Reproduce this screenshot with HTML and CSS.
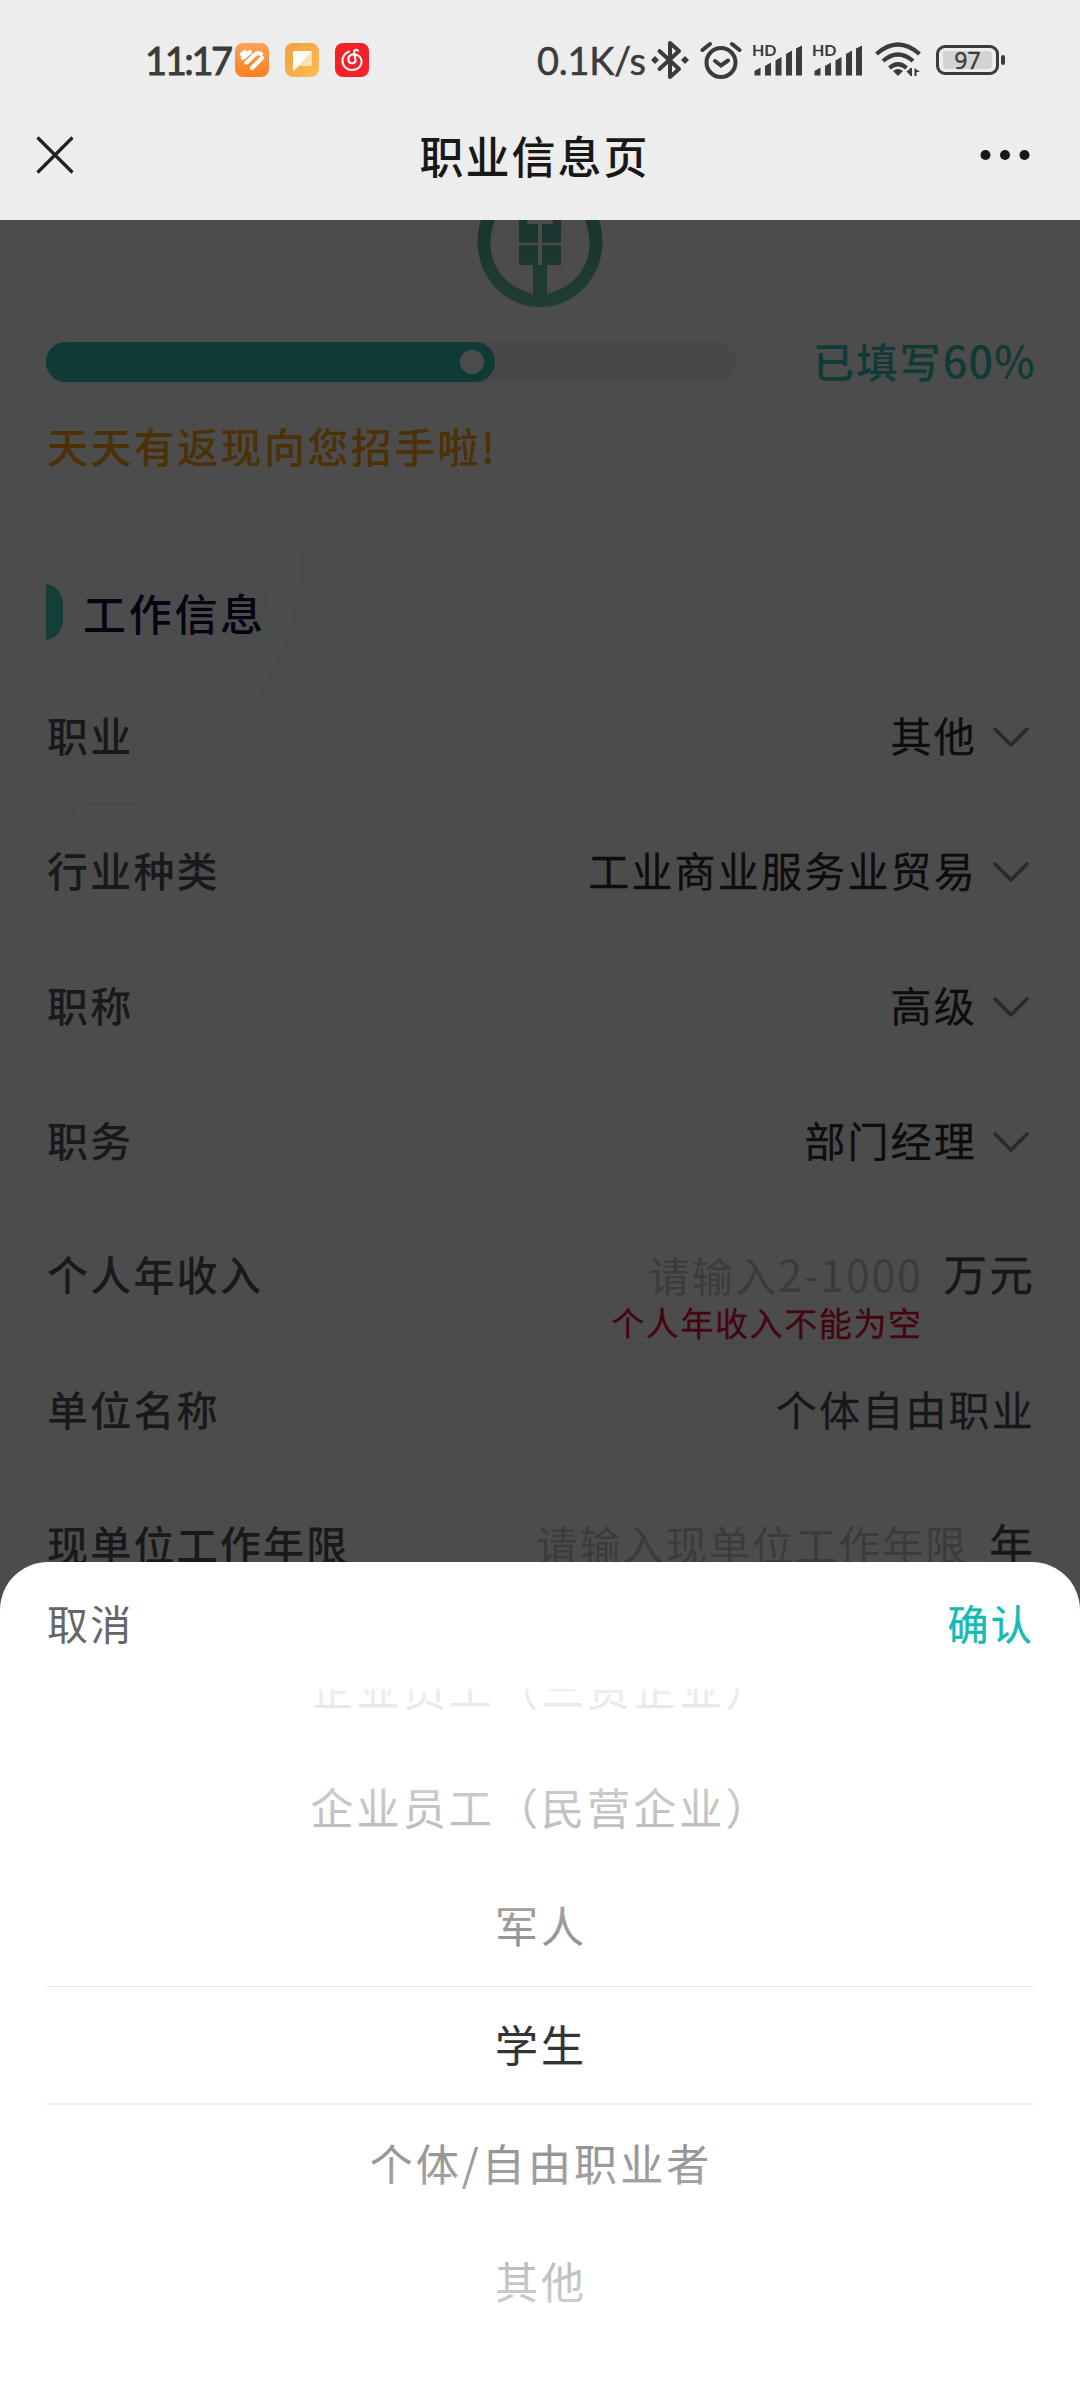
FILE: index.html
```html
<!DOCTYPE html>
<html lang="zh-CN">
<head>
<meta charset="utf-8">
<title>职业信息页</title>
<link rel="stylesheet" href="styles.css">
</head>
<body>
<div class="screen">
  <header class="top">
    <div class="status">
      <div class="status-left">
        <span class="clock">11:17</span>
        <svg class="app" viewBox="0 0 34 34"><defs><linearGradient id="g1" x2="0" y2="1"><stop stop-color="#f9a35b"/><stop offset="1" stop-color="#fb7f1c"/></linearGradient><linearGradient id="g2" x2="1" y2="1"><stop stop-color="#efa045"/><stop offset="1" stop-color="#ffbb50"/></linearGradient></defs><rect width="34" height="34" rx="8" fill="url(#g1)"/><g fill="none" stroke="#fff" stroke-width="4.2" stroke-linecap="round"><path d="M7 11l3-2M8 15l7-6M11.500 19.500l8.500-8Q23 9 26 11M17 25l10-10"/></g></svg>
        <svg class="app" viewBox="0 0 34 34"><rect width="34" height="34" rx="8" fill="url(#g2)"/><path d="M8 8h19v15H14.500L8 28z" fill="#ffe0b0"/><path d="M8 8h19L8 28z" fill="#fff"/></svg>
        <svg class="app" viewBox="0 0 34 34"><rect width="34" height="34" rx="8" fill="#f5202a"/><g fill="none" stroke="#fff" stroke-width="2.100" stroke-linecap="round"><path d="M14 8.500C3.500 13 6.500 27 17 27c10 0 13-11.500 5-15-5-2.300-9.500 1-8.500 5.500 1 4 7.500 3.500 7 -1l-1.500-7c-.3-2.500 2.500-3.500 4-1.800"/></g></svg>
      </div>
      <div class="status-right">
        <span class="speed">0.1K/s</span>
        <svg class="bt" width="38" height="42" viewBox="0 0 38 42"><g fill="none" stroke="#3b3b3b" stroke-width="4" stroke-linejoin="round" stroke-linecap="round"><path d="M8.500 12L28 30l-9 8V4l9 8L8.500 30"/></g><path d="M0 21l4-4 4 4-4 4zM30 21l4-4 4 4-4 4z" fill="#3b3b3b"/></svg>
        <svg class="alarm" width="42" height="38" viewBox="0 0 42 38"><g fill="none" stroke="#3b3b3b" stroke-width="4" stroke-linecap="round"><circle cx="21" cy="21.500" r="14.500"/><path d="M15 20l6 4.500 7-5M2.500 9L10 3M39.500 9L32 3"/></g></svg>
        <svg class="signal" width="50" height="34" viewBox="0 0 50 34"><path d="M2.500 32.500V28l6-3.500v8zM13 32.500V23l6-3.500v13zM23.500 32.500V17.500l6-3.500v18.500zM34 32.500V11l6-3.500v25zM44 32.500V5.500L50 2.500v30z" fill="#3b3b3b"/><text x="0" y="12.500" class="hd">HD</text></svg>
        <svg class="signal" width="50" height="34" viewBox="0 0 50 34"><path d="M2.500 32.500V28l6-3.500v8zM13 32.500V23l6-3.500v13zM23.500 32.500V17.500l6-3.500v18.500zM34 32.500V11l6-3.500v25zM44 32.500V5.500L50 2.500v30z" fill="#3b3b3b"/><text x="0" y="12.500" class="hd">HD</text></svg>
        <svg class="wifi" width="46" height="36" viewBox="0 0 46 36"><g fill="none" stroke="#3b3b3b" stroke-width="4.200"><path d="M1.500 12Q23-7 44.500 12M8 19q15-13 30 0M14.500 26q8.500-7.500 17 0"/></g><path d="M18 29q5-4 10 0l-5 5z" fill="#3b3b3b"/><path d="M36 26v8l-4.500-4.500zM35 26h2v8h-2zM39.500 26v8h2v-4h3.500z" fill="#3b3b3b"/></svg>
        <span class="battery"><span class="level">97</span></span>
      </div>
    </div>
    <div class="nav">
      <svg width="38" height="38" viewBox="0 0 38 38"><path d="M1.500 1.500l35 35M36.500 1.500l-35 35" stroke="#202020" stroke-width="3.200"/></svg>
      <h1>职业信息页</h1>
      <svg width="50" height="12" viewBox="0 0 50 12" fill="#181818"><circle cx="5.500" cy="6" r="5"/><circle cx="25" cy="6" r="5"/><circle cx="44.500" cy="6" r="5"/></svg>
    </div>
  </header>

  <main class="page">
    <svg class="watermark" width="1080" height="1342" viewBox="0 0 1080 1342"><g fill="none" stroke="#4b4e4d" stroke-width="29"><path d="M287 332C284 450 205 550 78 600"/><path d="M1062 1282Q1020 1315 960 1340"/></g></svg>
    <svg class="logo" width="126" height="88" viewBox="0 0 126 88"><defs><linearGradient id="g3" x2="0" y2="1"><stop stop-color="#19342f"/><stop offset="1" stop-color="#203d33"/></linearGradient></defs><path fill="url(#g3)" fill-rule="evenodd" d="M4 0H18C8 24 12 62 56 74V45H42V0H50V2Q50 4 52 4H74Q76 4 76 2V0H84V45H70V74C114 62 118 24 108 0H122C136 43 106 87 63 87S-10 43 4 0z"/><path d="M63 4v41" stroke="#4c4c4c" stroke-width="4"/><path d="M42 24h42" stroke="#4c4c4c" stroke-width="2.500"/></svg>
    <section class="progress">
      <div class="track"><div class="fill"><i></i></div></div>
      <span class="percent">已填写<b>60%</b></span>
    </section>
    <p class="promo">天天有返现向您招手啦!</p>
    <h2><i></i>工作信息</h2>
    <div class="rows">
      <div class="row"><label>职业</label><span class="value">其他</span><svg class="chev" viewBox="0 0 36 22"><path d="M2 2l16 16L34 2"/></svg></div>
      <div class="row"><label>行业种类</label><span class="value">工业商业服务业贸易</span><svg class="chev" viewBox="0 0 36 22"><path d="M2 2l16 16L34 2"/></svg></div>
      <div class="row"><label>职称</label><span class="value">高级</span><svg class="chev" viewBox="0 0 36 22"><path d="M2 2l16 16L34 2"/></svg></div>
      <div class="row"><label>职务</label><span class="value">部门经理</span><svg class="chev" viewBox="0 0 36 22"><path d="M2 2l16 16L34 2"/></svg></div>
      <div class="row"><label>个人年收入</label><span class="field"><span class="hint">请输入<b>2-1000</b></span><em class="error">个人年收入不能为空</em></span><span class="unit">万元</span></div>
      <div class="row"><label>单位名称</label><span class="plain">个体自由职业</span></div>
      <div class="row"><label>现单位工作年限</label><span class="hint">请输入现单位工作年限</span><span class="unit">年</span></div>
    </div>
  </main>

  <section class="sheet">
    <div class="actions"><span class="cancel">取消</span><span class="confirm">确认</span></div>
    <div class="picker">
      <ul>
        <li>企业员工（三资企业）</li>
        <li>企业员工（民营企业）</li>
        <li>军人</li>
        <li class="current">学生</li>
        <li>个体/自由职业者</li>
        <li>其他</li>
      </ul>
    </div>
  </section>
</div>
</body>
</html>
```
FILE: styles.css
```css
* { box-sizing: border-box; margin: 0; padding: 0; }
body { background: #4c4c4c; font-family: "Noto Sans CJK SC", sans-serif; }
i, em { font-style: normal; }
b { font-weight: inherit; }
svg { display: block; flex: none; }

.screen {
  display: flex; flex-direction: column;
  width: 1080px; height: 2400px; overflow: hidden; position: relative;
  background: #4c4c4c;
}

/* status bar and title bar */
.top { height: 220px; flex: none; background: #ededed; }
.status { height: 100px; padding: 0 75px 0 145px; display: flex; justify-content: space-between; align-items: flex-start; }
.status-left, .status-right { display: flex; height: 120px; align-items: center; color: #3b3b3b; font-family: Lato, sans-serif; }
.clock { width: 90px; font-size: 38px; line-height: 40px; letter-spacing: -2.400px; white-space: nowrap; -webkit-text-stroke: .9px; }
.app { width: 34px; height: 34px; margin-right: 16px; }
.speed { width: 114px; font-size: 38px; line-height: 40px; letter-spacing: -.3px; white-space: nowrap; -webkit-text-stroke: .5px; }
.alarm { margin-left: 11px; }
.signal { margin-left: 10px; overflow: visible; }
.alarm + .signal { margin-left: 10px; }
.hd { font: 700 16px Lato, sans-serif; fill: #3b3b3b; }
.wifi { margin-left: 13px; }
.battery {
  width: 63px; height: 30px; margin: 0 6px 0 15px; padding: 4px; position: relative;
  border: 3px solid #3b3b3b; border-radius: 9px;
}
.battery::after { content: ""; position: absolute; right: -9px; top: 7px; width: 4px; height: 10px; border-radius: 2px; background: #3b3b3b; }
.level { display: block; width: 49px; height: 18px; margin-top: -1px; background: #d4d4d4; font: 23px/19px "Noto Sans", sans-serif; text-align: center; border-radius: 3px; -webkit-text-stroke: .3px; }
.nav { height: 110px; padding: 0 50px 0 36px; display: grid; grid-template-columns: 50px 1fr 50px; align-items: center; }
.nav h1 { text-align: center; margin-right: 14px; padding-left: 17px; font-size: 44px; line-height: 60px; font-weight: 500; letter-spacing: 2px; color: #181818; }

/* form page under the mask */
.page { flex: 1; display: flex; flex-direction: column; position: relative; isolation: isolate; }
.watermark { position: absolute; left: 0; top: 0; z-index: -1; }
.logo { align-self: center; }
.progress { height: 40px; margin: 34px 46px 0; display: flex; justify-content: space-between; align-items: center; }
.track { width: 690px; height: 40px; border-radius: 20px; background: #484848; }
.fill { width: 449px; height: 40px; padding-right: 11px; border-radius: 20px; background: #103a36; display: flex; align-items: center; justify-content: flex-end; }
.fill i { width: 24px; height: 24px; border-radius: 50%; background: #4c4c4c; }
.percent { height: 46px; font-size: 41px; line-height: 40px; letter-spacing: 2.200px; color: #103a36; margin-right: -2px; font-weight: 500; white-space: nowrap; }
.percent b { font-size: 43px; letter-spacing: 1.300px; }
.promo { margin: 33px 45px 0 47px; height: 60px; font-size: 41px; line-height: 60px; letter-spacing: 2.400px; color: #4c3106; font-weight: 500; }
h2 { height: 56px; margin: 109px 46px 0; display: flex; align-items: center; font-size: 43px; line-height: 60px; letter-spacing: 2.700px; font-weight: 500; color: #040512; }
h2 i { width: 17px; height: 56px; margin-right: 20px; border-radius: 0 17px 17px 0 / 0 22px 22px 0; background: #124039; }
.rows { margin-top: 28px; height: 894px; overflow: hidden; }
.row { height: 134.750px; border-top: 2px solid #494949; padding: 0 46px 4px 47px; display: flex; align-items: center; font-size: 41px; letter-spacing: 2.200px; line-height: 60px; white-space: nowrap; }
.row label { flex: 1; color: #17191b; font-weight: 500; }
.value { color: #0d0d0d; -webkit-text-stroke: .3px; }
.chev { width: 36px; height: 22px; margin: 8px 5px 0 16px; fill: none; stroke: #292929; stroke-width: 3.500; stroke-linecap: round; stroke-linejoin: round; }
.plain { color: #15171a; margin-right: -1px; -webkit-text-stroke: .3px; }
.hint { color: #3b3b3b; display: block; }
.hint b { font-size: 43px; letter-spacing: 1.700px; }
.field { position: relative; }
.error { position: absolute; right: 0; top: 57px; font-size: 33px; line-height: 44px; letter-spacing: 1.600px; color: #450411; -webkit-text-stroke: .3px; }
.unit { margin-left: 21px; margin-right: -1px; font-size: 43.500px; color: #15171a; -webkit-text-stroke: .5px; }

/* bottom sheet */
.sheet { position: absolute; left: 0; right: 0; bottom: 0; height: 838px; background: #fff; border-radius: 48px 48px 0 0; display: flex; flex-direction: column; }
.actions { height: 127px; padding: 0 46px 7px 47px; display: flex; justify-content: space-between; align-items: center; font-size: 41px; line-height: 60px; letter-spacing: 2.200px; }
.cancel { color: #666; }
.confirm { color: #14bbb5; -webkit-text-stroke: .4px; }
.picker { height: 711px; overflow: hidden; position: relative; padding: 0 46px; }
.picker::before, .picker::after { content: ""; position: absolute; left: 0; right: 0; height: 297px; pointer-events: none; }
.picker::before { top: 0; background: linear-gradient(to top, rgba(255,255,255,.4), rgba(255,255,255,.92)); }
.picker::after { bottom: 0; background: linear-gradient(to bottom, rgba(255,255,255,.4), rgba(255,255,255,.92)); }
.picker ul { list-style: none; margin-top: -59px; }
.picker li { height: 118.700px; padding-left: 2px; line-height: 114.700px; text-align: center; font-size: 43px; letter-spacing: 3.100px; color: #333; white-space: nowrap; -webkit-text-stroke: .2px; }
.picker li.current { border-top: 1px solid #e4e4e4; border-bottom: 2px solid #e4e4e4; line-height: 112.700px; }
```
